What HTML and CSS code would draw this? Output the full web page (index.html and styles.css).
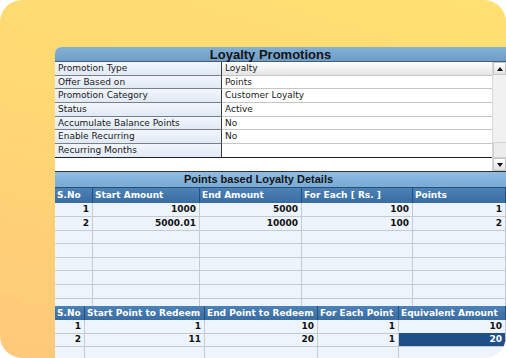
FILE: index.html
```html
<!DOCTYPE html>
<html lang="en">
<head>
  <meta charset="UTF-8" />
  <title>Loyalty Promotions</title>
  <link rel="stylesheet" href="styles.css">
</head>
<body>

  <div class="card">
    <div class="window">
      <div class="titlebar">Loyalty Promotions</div>

      <div class="props">
        <div class="props-list">
          <div class="prop first"><div class="prop-label">Promotion Type</div><div class="prop-value">Loyalty</div></div>
          <div class="prop"><div class="prop-label">Offer Based on</div><div class="prop-value">Points</div></div>
          <div class="prop"><div class="prop-label">Promotion Category</div><div class="prop-value">Customer Loyalty</div></div>
          <div class="prop"><div class="prop-label">Status</div><div class="prop-value">Active</div></div>
          <div class="prop"><div class="prop-label">Accumulate Balance Points</div><div class="prop-value">No</div></div>
          <div class="prop"><div class="prop-label">Enable Recurring</div><div class="prop-value">No</div></div>
          <div class="prop last"><div class="prop-label">Recurring Months</div><div class="prop-value"></div></div>
        </div>
        <div class="scrollbar">
          <div class="sb-btn"><span class="arrow up"></span></div>
          <div class="sb-track"><div class="sb-thumb"></div></div>
          <div class="sb-btn"><span class="arrow down"></span></div>
        </div>
      </div>

      <div class="section-head">Points based Loyalty Details</div>

      <div class="grid-head earn">
        <div>S.No</div><div>Start Amount</div><div>End Amount</div><div>For Each [ Rs. ]</div><div>Points</div>
      </div>
      <div class="grid-body">
        <div class="grid-row earn"><div>1</div><div>1000</div><div>5000</div><div>100</div><div>1</div></div>
        <div class="grid-row earn"><div>2</div><div>5000.01</div><div>10000</div><div>100</div><div>2</div></div>
        <div class="grid-row earn"><div></div><div></div><div></div><div></div><div></div></div>
        <div class="grid-row earn"><div></div><div></div><div></div><div></div><div></div></div>
        <div class="grid-row earn"><div></div><div></div><div></div><div></div><div></div></div>
        <div class="grid-row earn"><div></div><div></div><div></div><div></div><div></div></div>
        <div class="grid-row earn"><div></div><div></div><div></div><div></div><div></div></div>
        <div class="grid-row earn"><div></div><div></div><div></div><div></div><div></div></div>
      </div>

      <div class="grid-head redeem">
        <div>S.No</div><div>Start Point to Redeem</div><div>End Point to Redeem</div><div>For Each Point</div><div>Equivalent Amount</div>
      </div>
      <div class="grid-row redeem"><div>1</div><div>1</div><div>10</div><div>1</div><div>10</div></div>
      <div class="grid-row redeem"><div>2</div><div>11</div><div>20</div><div>1</div><div class="selected">20</div></div>
      <div class="grid-row redeem"><div></div><div></div><div></div><div></div><div></div></div>
    </div>
  </div>

</body>
</html>
```

FILE: styles.css
```css
body {
  margin: 0;
  background: #fff;
  font-family: "DejaVu Sans", Verdana, sans-serif;
  font-size: 9px;
  color: #111;
}

.card {
  width: 506px;
  height: 358px;
  box-sizing: border-box;
  padding: 47px 0 0 55px;
  border-radius: 22px;
  overflow: hidden;
  background: linear-gradient(195deg, #ffe072 0%, #ffd873 45%, #ffc87a 100%);
}

.window {
  height: 100%;
  background: #fff;
  border-top-left-radius: 6px;
  overflow: hidden;
}

.titlebar {
  height: 15px;
  box-sizing: border-box;
  padding-right: 20px;
  background: linear-gradient(#84b1d7, #6d9dc7);
  border-bottom: 1px solid #4b5c6e;
  font: bold 13px "Liberation Sans", Arial, sans-serif;
  line-height: 15px;
  text-align: center;
  color: #141414;
}

/* property list */
.props {
  display: flex;
  height: 109px;
  border-bottom: 1px solid #333;
}

.props-list {
  flex: 1;
}

.prop {
  display: grid;
  grid-template-columns: 167px 1fr;
  height: 13.7px;
}

.prop > div {
  box-sizing: border-box;
  padding-left: 3px;
  line-height: 13px;
  white-space: nowrap;
  overflow: hidden;
}

.prop-label {
  background: linear-gradient(#f2f6fc, #e0e9f5);
  border-right: 1px solid #3a3a3a;
  border-bottom: 1px solid #7a7f86;
  color: #1a1a1a;
}

.prop-value {
  border-bottom: 1px solid #c6c6c6;
  color: #1a1a1a;
}

.prop.first .prop-value {
  background: linear-gradient(#ffffff, #e4e4e4);
}

.prop.last .prop-label,
.prop.last .prop-value {
  border-bottom-color: #222;
}

.scrollbar {
  width: 13px;
  display: flex;
  flex-direction: column;
  background: #f1f1f1;
  border-left: 1px solid #d8d8d8;
}

.sb-btn {
  height: 13px;
  box-sizing: border-box;
  display: flex;
  align-items: center;
  justify-content: center;
  background: linear-gradient(#ffffff, #e2e2e2);
  border: 1px solid #c4c4c4;
}

.sb-track {
  flex: 1;
  display: flex;
  flex-direction: column;
  justify-content: flex-end;
}

.sb-thumb {
  height: 14px;
  background: #ececec;
  border: 1px solid #d2d2d2;
  border-right: none;
}

.arrow {
  width: 0;
  height: 0;
  border-left: 3px solid transparent;
  border-right: 3px solid transparent;
}

.arrow.up {
  border-bottom: 4px solid #111;
}

.arrow.down {
  border-top: 4px solid #111;
}

/* loyalty details */
.section-head {
  height: 16px;
  box-sizing: border-box;
  padding-right: 44px;
  background: linear-gradient(#8fbce3, #78abd6);
  border-bottom: 1px solid #2c4e70;
  font: bold 11px "Liberation Sans", Arial, sans-serif;
  line-height: 15px;
  text-align: center;
  color: #141414;
}

.earn {
  grid-template-columns: 38px 107px 102px 111px 1fr;
}

.redeem {
  grid-template-columns: 30px 120px 113px 81px 1fr;
}

.grid-head {
  display: grid;
  height: 15px;
  background: linear-gradient(#4b82b8, #3a6ca0);
  color: #fff;
  font-weight: bold;
}

.grid-head.redeem {
  height: 14px;
}

.grid-head > div {
  box-sizing: border-box;
  padding-left: 2px;
  border-right: 1px solid #24507e;
  line-height: 15px;
  white-space: nowrap;
  overflow: hidden;
}

.grid-head.redeem > div {
  line-height: 14px;
}

.grid-body {
  height: 103px;
  overflow: hidden;
}

.grid-row {
  display: grid;
  height: 13.7px;
  background: #eef4fc;
  font-weight: bold;
}

.grid-row.redeem {
  height: 13.3px;
}

.grid-row > div {
  box-sizing: border-box;
  padding-right: 3px;
  border-right: 1px solid #c4cad4;
  border-bottom: 1px solid #c4cad4;
  text-align: right;
  line-height: 13px;
}

.grid-row > div.selected {
  background: #1f4f86;
  color: #fff;
}
```
